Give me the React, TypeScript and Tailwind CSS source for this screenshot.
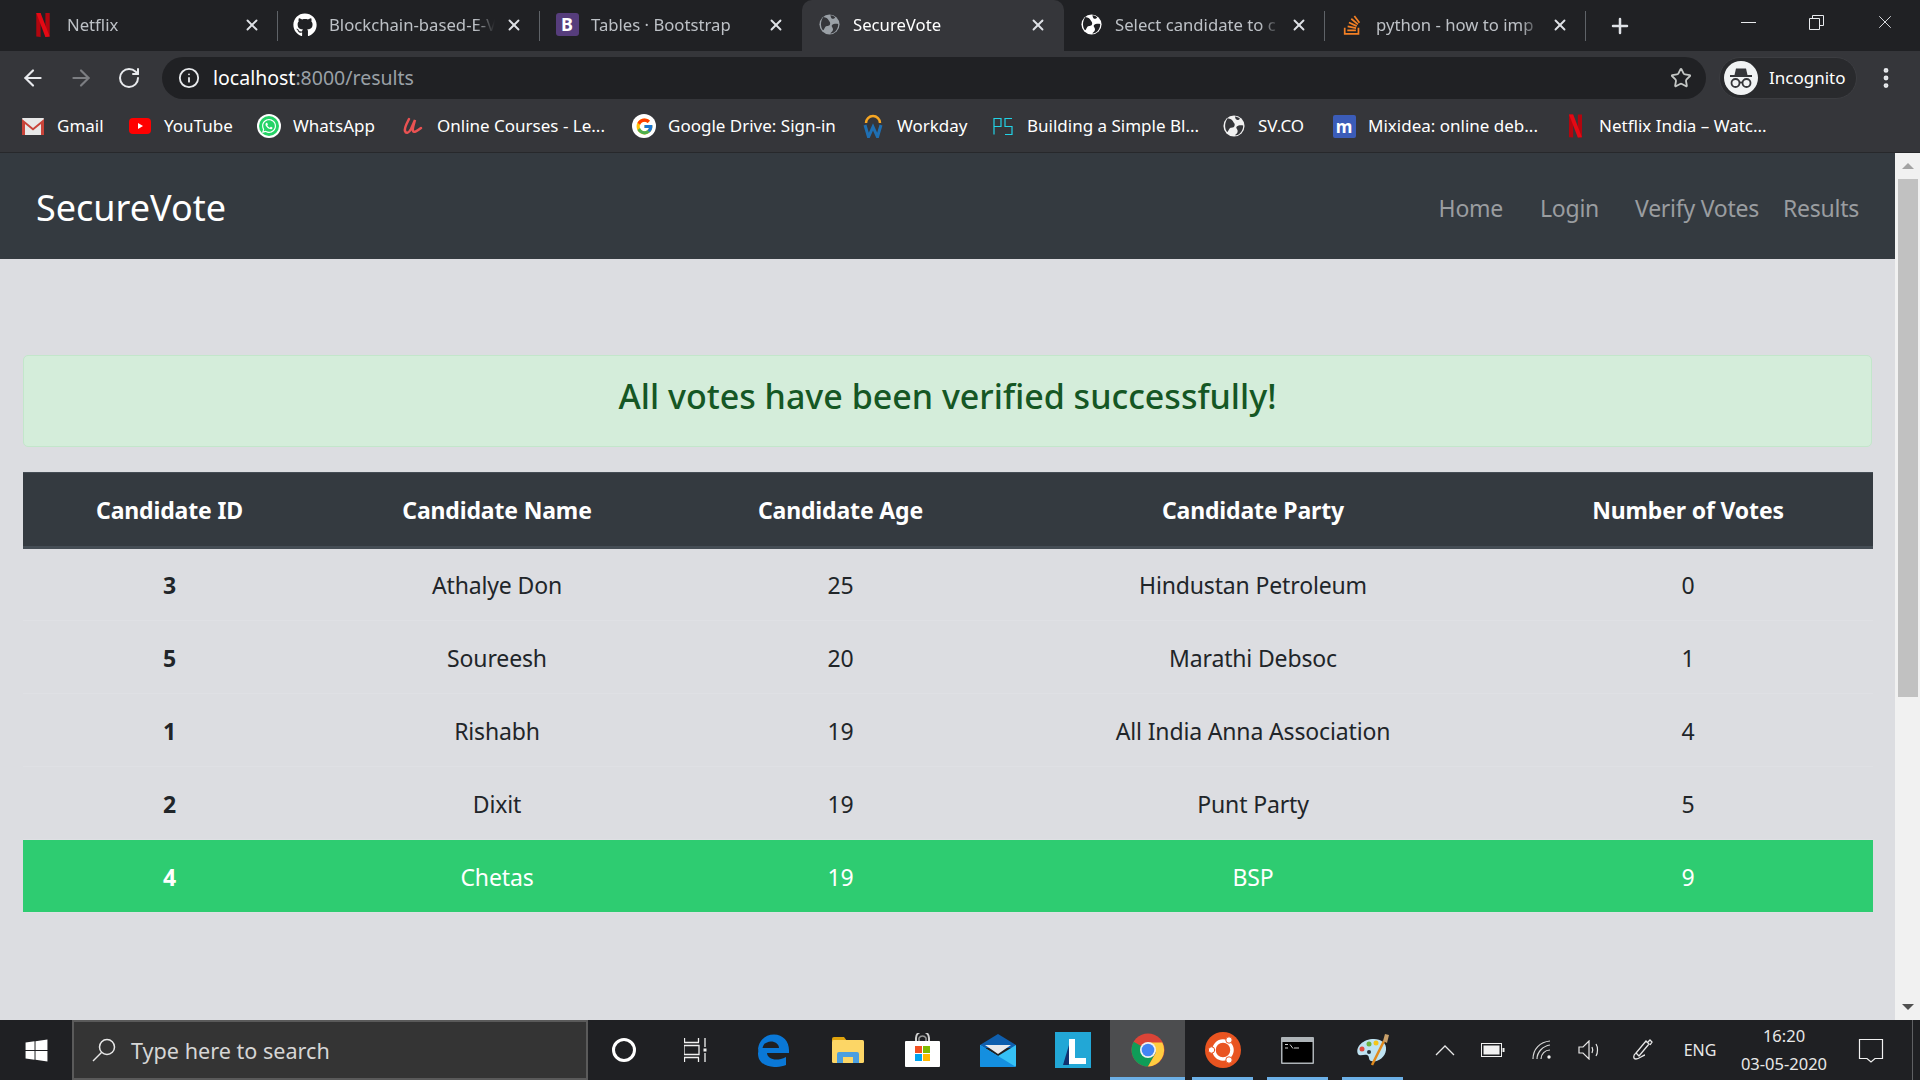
import { ArrowLeft, ArrowRight, Info, MoreVertical, Plus, RotateCw, Star, X } from "lucide-react";
import { FaGithub, FaStackOverflow, FaWhatsapp, FaWindows } from "react-icons/fa";
import { FcGoogle } from "react-icons/fc";

const Globe = ({ bg = "#ffffff", fg = "#202124", size = 21 }: { bg?: string; fg?: string; size?: number }) => (
  <svg width={size} height={size} viewBox="0 0 24 24">
    <circle cx="12" cy="12" r="11.5" fill={bg} />
    <path d="M5 3.500c3 .5 5 1.500 6 3.500s2.500 2.500 1.500 5-4 1-5.500 3-1 3-2.500 3.500C2 15.500 1 9 5 3.500z" fill={fg} />
    <path d="M15 12.500c2-1.500 4.500-1.500 7-1 .2 4-2 8-5.500 10-1.500.6-3 1-3.500.5 1.500-1.500 3-2 3-4.500s-2.500-3-1-5z" fill={fg} />
    <path d="M13 1.500c2 0 4 1 5.500 2.500-1 1.500-3 2-4 1s-1-2-1.500-3.500z" fill={fg} />
  </svg>
);

const NetflixN = ({ w = 14, h = 25 }: { w?: number; h?: number }) => (
  <svg width={w} height={h} viewBox="0 0 14 25">
    <path d="M0 0h4.500v25L0 24.500z" fill="#b1060f" />
    <path d="M9.500 0H14v24.500L9.500 25z" fill="#b1060f" />
    <path d="M0 0h4.500L14 24.500 9.500 25z" fill="#e50914" />
  </svg>
);

const Bootstrap = () => (
  <div className="flex h-[23px] w-[23px] items-center justify-center rounded-[3px] bg-[#563d7c] text-[18px] font-bold text-white">
    B
  </div>
);

const tabs = [
  { title: "Netflix", icon: <NetflixN w={14} h={24} />, width: "w-[262px]", sep: true },
  { title: "Blockchain-based-E-V", icon: <FaGithub size={24} className="text-white" />, width: "w-[262px]", sep: true },
  { title: "Tables · Bootstrap", icon: <Bootstrap />, width: "w-[262px]" },
  { title: "SecureVote", icon: <Globe bg="#9aa0a6" fg="#35363a" />, width: "w-[262px]", active: true },
  { title: "Select candidate to c", icon: <Globe />, width: "w-[261px]", sep: true },
  { title: "python - how to imp", icon: <FaStackOverflow size={22} className="text-[#f48024]" />, width: "w-[261px]", sep: true },
];

const GmailIcon = () => (
  <svg width="22" height="17" viewBox="0 0 22 17">
    <rect width="22" height="17" rx="1" fill="#e8e8e8" />
    <path d="M0 1l11 9 11-9v16h-3V6l-8 6.500L3 6v11H0z" fill="#c9443a" />
  </svg>
);

const YoutubeIcon = () => (
  <svg width="22" height="16" viewBox="0 0 22 16">
    <rect width="22" height="16" rx="4" fill="#ff0000" />
    <path d="M9 5l5 3-5 3z" fill="#fff" />
  </svg>
);

const WhatsappIcon = () => (
  <div className="flex h-[24px] w-[24px] items-center justify-center rounded-full bg-white">
    <div className="flex h-[20px] w-[20px] items-center justify-center rounded-full bg-[#25d366]">
      <FaWhatsapp size={16} className="text-white" />
    </div>
  </div>
);

const UdemyIcon = () => (
  <svg width="22" height="20" viewBox="0 0 22 20">
    <path d="M7 3C5 7 2 12 3 15c1 3 4 2 6-2l4-9c-1 4-3 9-2 11s4 0 8-3" fill="none" stroke="#ea5252" strokeWidth="2.500" strokeLinecap="round" />
  </svg>
);

const WorkdayIcon = () => (
  <svg width="20" height="24" viewBox="0 0 20 24">
    <path d="M3 9a7 7 0 0 1 14 0" fill="none" stroke="#f6a623" strokeWidth="2.500" />
    <path d="M2 11l3.500 12L10 13l4.500 10L18 11" fill="none" stroke="#1f6fb2" strokeWidth="3" />
  </svg>
);

const BuildingIcon = () => (
  <svg width="20" height="17" viewBox="0 0 20 17" fill="none" stroke="#22d3e6" strokeWidth="1.200">
    <path d="M1 16.500V.5h7v8H1" />
    <path d="M19 .5h-7v8h7v8h-7" />
  </svg>
);

const MixideaIcon = () => (
  <div className="flex h-[23px] w-[23px] items-center justify-center rounded-[2px] bg-[#3b5cb8] text-[17px] font-bold leading-none text-white">
    m
  </div>
);

const bookmarks = [
  { label: "Gmail", icon: <GmailIcon />, width: "w-[107px]" },
  { label: "YouTube", icon: <YoutubeIcon />, width: "w-[129px]" },
  { label: "WhatsApp", icon: <WhatsappIcon />, width: "w-[144px]" },
  { label: "Online Courses - Le...", icon: <UdemyIcon />, width: "w-[231px]" },
  { label: "Google Drive: Sign-in", icon: <div className="flex h-[24px] w-[24px] items-center justify-center rounded-full bg-white"><FcGoogle size={19} /></div>, width: "w-[229px]" },
  { label: "Workday", icon: <WorkdayIcon />, width: "w-[130px]" },
  { label: "Building a Simple Bl...", icon: <BuildingIcon />, width: "w-[231px]" },
  { label: "SV.CO", icon: <Globe size={22} bg="#f1f1f1" fg="#35363a" />, width: "w-[110px]" },
  { label: "Mixidea: online deb...", icon: <MixideaIcon />, width: "w-[231px]" },
  { label: "Netflix India – Watc...", icon: <NetflixN w={13} h={24} />, width: "w-[217px]" },
];

const IncognitoIcon = () => (
  <svg width="34" height="34" viewBox="0 0 34 34">
    <circle cx="17" cy="17" r="17" fill="#f1f3f4" />
    <path d="M12 7.500h10l1.500 6.500h-13z" fill="#35363a" />
    <rect x="6" y="14" width="22" height="2" fill="#35363a" />
    <circle cx="11.500" cy="22" r="4" fill="none" stroke="#35363a" strokeWidth="1.800" />
    <circle cx="22.500" cy="22" r="4" fill="none" stroke="#35363a" strokeWidth="1.800" />
    <path d="M15.500 21.500h3" stroke="#35363a" strokeWidth="1.800" />
  </svg>
);

const EdgeIcon = () => (
  <svg width="32" height="33" viewBox="0 0 32 33">
    <path d="M1 17C1 7 8 .5 17 .5c9 0 15 7 15 15.500v3H10c.5 6 9 9 19 4v8c-9 4-28 3-28-11.500 0-5 3-9 8-11.500-2 2-3 4-3.500 6H22c0-5-7-8-12-5.500C6 10 2 13 1 17z" fill="#0a78d7" />
  </svg>
);

const FolderIcon = () => (
  <svg width="32" height="26" viewBox="0 0 32 26">
    <path d="M0 2a2 2 0 0 1 2-2h10l3 4h-15z" fill="#e0a30c" />
    <rect y="3" width="32" height="23" rx="1.500" fill="#fcd666" />
    <path d="M5 26v-9a2 2 0 0 1 2-2h18a2 2 0 0 1 2 2v9h-6v-6H11v6z" fill="#4b9fe0" />
  </svg>
);

const StoreIcon = () => (
  <svg width="35" height="34" viewBox="0 0 35 34">
    <path d="M11 9V5a6 6 0 0 1 13 0v4" fill="none" stroke="#d0d0d0" strokeWidth="2" />
    <path d="M14 9V5a4 4 0 0 1 7 0v4" fill="none" stroke="#9a9a9a" strokeWidth="1.500" />
    <rect y="8" width="35" height="26" rx="1" fill="#ffffff" />
    <rect x="10" y="13" width="7" height="7" fill="#f25022" />
    <rect x="18" y="13" width="7" height="7" fill="#7fba00" />
    <rect x="10" y="21" width="7" height="7" fill="#00a4ef" />
    <rect x="18" y="21" width="7" height="7" fill="#ffb900" />
  </svg>
);

const MailIcon = () => (
  <svg width="36" height="33" viewBox="0 0 36 33">
    <path d="M0 11L18 0l18 11v3H0z" fill="#0f5fae" />
    <path d="M5 11h26l-13 9z" fill="#e9eaec" />
    <path d="M0 11l18 11 18-11v20.500a1.500 1.500 0 0 1-1.500 1.500h-33A1.500 1.500 0 0 1 0 31.500z" fill="#35c1f5" />
    <path d="M0 11l36 22H1.500A1.500 1.500 0 0 1 0 31.500z" fill="#148fe0" />
  </svg>
);

const LIcon = () => (
  <svg width="36" height="36" viewBox="0 0 36 36">
    <rect width="36" height="36" fill="#22a7d6" />
    <path d="M8 33l6-20v20z" fill="#12306f" />
    <path d="M14 7h6v19h11v6H14z" fill="#ffffff" />
  </svg>
);

const ChromeIcon = () => (
  <svg width="34" height="34" viewBox="0 0 34 34">
    <circle cx="17" cy="17" r="16.500" fill="#db4437" />
    <path d="M17 17L2.700 8.800A16.500 16.500 0 0 0 17 33.500l8-14.300z" fill="#0f9d58" />
    <path d="M17 9.500h14.300A16.500 16.500 0 0 1 17 33.500L25 19.500z" fill="#ffcd40" />
    <circle cx="17" cy="17" r="8" fill="#f1f1f1" />
    <circle cx="17" cy="17" r="6.300" fill="#4285f4" />
  </svg>
);

const UbuntuIcon = () => (
  <svg width="36" height="36" viewBox="0 0 36 36">
    <circle cx="18" cy="18" r="18" fill="#e95420" />
    <circle cx="18" cy="18" r="9" fill="none" stroke="#fff" strokeWidth="3.500" />
    <circle cx="6.500" cy="18" r="3.200" fill="#fff" stroke="#e95420" strokeWidth="1" />
    <circle cx="24" cy="8" r="3.200" fill="#fff" stroke="#e95420" strokeWidth="1" />
    <circle cx="24" cy="28" r="3.200" fill="#fff" stroke="#e95420" strokeWidth="1" />
  </svg>
);

const TerminalIcon = () => (
  <svg width="33" height="27" viewBox="0 0 33 27">
    <rect width="33" height="27" rx="1" fill="#aeb4b8" />
    <rect x="1.500" y="5" width="30" height="20.500" fill="#000" />
    <path d="M4 7.500h3M4 11h3M9 7.500l3 4M13 11h5" stroke="#d0d0d0" strokeWidth="1" />
  </svg>
);

const PaletteIcon = () => (
  <svg width="36" height="36" viewBox="0 0 36 36">
    <path d="M3 22C0 15 8 7 19 7c7 0 13 4 12 11-1 8-9 13-15 11-3-1-1-5-4-6-3-1-7 2-9-1z" fill="#bfe3f2" />
    <circle cx="7" cy="17" r="2.500" fill="#e04a3f" />
    <circle cx="14" cy="12" r="2.500" fill="#6db33f" />
    <circle cx="21" cy="11" r="2.500" fill="#f5c518" />
    <circle cx="14" cy="20" r="2" fill="#26323a" />
    <path d="M17 33L29 9" stroke="#e08a1e" strokeWidth="2.500" />
    <path d="M28 9l2-7 4 1-2 8z" fill="#c9a06a" />
  </svg>
);

const taskbarApps = [
  { icon: <EdgeIcon /> },
  { icon: <FolderIcon /> },
  { icon: <StoreIcon /> },
  { icon: <MailIcon /> },
  { icon: <LIcon /> },
  { icon: <ChromeIcon />, running: "full", active: true },
  { icon: <UbuntuIcon />, running: "inset" },
  { icon: <TerminalIcon />, running: "inset" },
  { icon: <PaletteIcon />, running: "inset" },
];

const candidates = [
  { id: 3, name: "Athalye Don", age: 25, party: "Hindustan Petroleum", votes: 0 },
  { id: 5, name: "Soureesh", age: 20, party: "Marathi Debsoc", votes: 1 },
  { id: 1, name: "Rishabh", age: 19, party: "All India Anna Association", votes: 4 },
  { id: 2, name: "Dixit", age: 19, party: "Punt Party", votes: 5 },
  { id: 4, name: "Chetas", age: 19, party: "BSP", votes: 9 },
];

export default function App() {
  return (
    <div className="flex h-[1080px] w-[1920px] flex-col overflow-hidden bg-[#dcdde1] [font-family:'Noto_Sans',sans-serif]">
      {/* tab strip */}
      <div className="flex h-[51px] shrink-0 bg-[#202124] pl-[16px]">
        {tabs.map((t) => (
          <div
            key={t.title}
            className={`relative flex h-[51px] items-center ${t.width} pb-[2px] pl-[15px] pr-[17px] ${t.active ? "rounded-t-[10px] bg-[#35363a] text-white" : "text-[#bdc1c6]"}`}
          >
            <div className="flex w-[24px] shrink-0 justify-center">{t.icon}</div>
            <div className="ml-[12px] min-w-0 flex-1 overflow-hidden whitespace-nowrap text-[16.7px] [mask-image:linear-gradient(to_right,black_88%,transparent)]">
              {t.title}
            </div>
            <X size={18} strokeWidth={2.5} className="ml-[10px] shrink-0 text-[#dee1e6]" />
            {t.sep ? <div className="absolute right-0 top-[11px] h-[30px] w-px bg-[#5f6368]" /> : null}
          </div>
        ))}
        <div className="flex w-[68px] items-center justify-center">
          <Plus size={24} strokeWidth={2.5} className="text-[#dee1e6]" />
        </div>
        <div className="flex flex-1 items-start justify-end text-[#e8eaed]">
          <div className="flex h-[44px] w-[68px] items-center justify-center">
            <div className="h-px w-[15px] bg-[#e8eaed]" />
          </div>
          <div className="flex h-[44px] w-[68px] items-center justify-center">
            <svg width="15" height="15" viewBox="0 0 15 15" fill="none" stroke="#e8eaed">
              <path d="M.5 3.500h10v11H.5z" />
              <path d="M3.500 3.500v-3h11v10h-4" />
            </svg>
          </div>
          <div className="flex h-[44px] w-[70px] items-center justify-center">
            <X size={22} strokeWidth={1} />
          </div>
        </div>
      </div>

      {/* toolbar */}
      <div className="flex h-[51px] shrink-0 items-center bg-[#35363a] pl-[20px] pt-[3px]">
        <ArrowLeft size={26} strokeWidth={2} className="text-[#e8eaed]" />
        <ArrowRight size={26} strokeWidth={2} className="ml-[22px] text-[#7c7e82]" />
        <RotateCw size={24} strokeWidth={2} className="ml-[23px] text-[#e8eaed]" />
        <div className="ml-[21px] flex h-[42px] w-[1544px] items-center rounded-full bg-[#202124] pl-[16px] pr-[14px]">
          <Info size={22} className="text-[#e8eaed]" />
          <div className="ml-[13px] flex-1 text-[19.5px]">
            <span className="text-white">localhost</span>
            <span className="text-[#9aa0a6]">:8000/results</span>
          </div>
          <Star size={22} strokeWidth={2} className="text-[#c4c7c5]" />
        </div>
        <div className="ml-[13px] flex h-[42px] w-[138px] items-center rounded-full border border-[#3c3d41] bg-[#292a2d] pl-[4px]">
          <IncognitoIcon />
          <span className="ml-[11px] text-[17px] text-white">Incognito</span>
        </div>
        <MoreVertical size={26} strokeWidth={2.5} className="ml-[16px] text-[#e8eaed]" />
      </div>

      {/* bookmarks */}
      <div className="flex h-[51px] shrink-0 items-center border-b border-[#27282b] bg-[#35363a] pb-[2px] pl-[21px]">
        {bookmarks.map((b) => (
          <div key={b.label} className={`flex items-center ${b.width} shrink-0`}>
            <div className="flex w-[24px] shrink-0 justify-center">{b.icon}</div>
            <span className="ml-[12px] whitespace-nowrap text-[17px] text-white">{b.label}</span>
          </div>
        ))}
      </div>

      {/* page */}
      <div className="flex min-h-0 flex-1">
        <div className="min-w-0 flex-1">
          <nav className="flex h-[106px] items-center bg-[#343a40] pl-[36px] pr-[36px] pt-[4px]">
            <div className="flex-1 text-[36px] text-white">SecureVote</div>
            <div className="flex items-center text-[23px] tracking-[-0.25px] text-[#9a9da0]">
              <a className="mr-[37px]">Home</a>
              <a className="mr-[36px]">Login</a>
              <a className="mr-[24px]">Verify Votes</a>
              <a>Results</a>
            </div>
          </nav>
          <div className="px-[23px] pt-[96px]">
            <div className="flex h-[92px] items-start justify-center rounded-[5px] border border-[#c3e6cb] bg-[#d4edda] pt-[15px] text-[34px] font-medium text-[#155724]">
              All votes have been verified successfully!
            </div>
            <table className="mt-[25px] w-[1850px] table-fixed border-collapse text-center text-[23px] tracking-[-0.15px] text-[#212529]">
              <thead>
                <tr className="h-[75px] border-b-[3px] border-t border-[#454d55] bg-[#343a40] text-white">
                  <th className="w-[293px] pt-[2px] font-bold">Candidate ID</th>
                  <th className="w-[362px] pt-[2px] font-bold">Candidate Name</th>
                  <th className="w-[325px] pt-[2px] font-bold">Candidate Age</th>
                  <th className="w-[500px] pt-[2px] font-bold">Candidate Party</th>
                  <th className="w-[370px] pt-[2px] font-bold">Number of Votes</th>
                </tr>
              </thead>
              <tbody>
                {candidates.map((c) => (
                  <tr
                    key={c.id}
                    className={`h-[73px] border-b border-[#dfe0e4] ${c.id === 4 ? "bg-[#2ecc71] text-white" : ""}`}
                  >
                    <td className="pt-[2px] font-bold">{c.id}</td>
                    <td className="pt-[2px]">{c.name}</td>
                    <td className="pt-[2px]">{c.age}</td>
                    <td className="pt-[2px]">{c.party}</td>
                    <td className="pt-[2px]">{c.votes}</td>
                  </tr>
                ))}
              </tbody>
            </table>
          </div>
        </div>
        {/* scrollbar */}
        <div className="flex w-[25px] shrink-0 flex-col items-center bg-[#f1f1f1]">
          <div className="flex h-[26px] w-full items-center justify-center">
            <div className="h-0 w-0 border-x-[6px] border-b-[6px] border-x-transparent border-b-[#a3a3a3]" />
          </div>
          <div className="h-[518px] w-[20px] bg-[#c1c1c1]" />
          <div className="flex-1" />
          <div className="flex h-[26px] w-full items-center justify-center">
            <div className="h-0 w-0 border-x-[6px] border-t-[6px] border-x-transparent border-t-[#505050]" />
          </div>
        </div>
      </div>

      {/* taskbar */}
      <div className="flex h-[60px] shrink-0 items-stretch bg-[#1f2023] text-white">
        <div className="flex w-[72px] items-center justify-center">
          <FaWindows size={25} className="text-white" />
        </div>
        <div className="flex w-[516px] items-center border-2 border-[#5a5a5a] bg-[#343434] pl-[17px]">
          <svg width="26" height="26" viewBox="0 0 26 26" fill="none" stroke="#e8e8e8" strokeWidth="1.500">
            <circle cx="16" cy="10" r="7.500" />
            <path d="M10.500 15.500L2 24" />
          </svg>
          <span className="ml-[14px] pt-[2px] text-[21.6px] text-[#d6d6d6]">Type here to search</span>
        </div>
        <div className="flex w-[71px] items-center justify-center">
          <div className="h-[24px] w-[24px] rounded-full border-[3px] border-white" />
        </div>
        <div className="flex w-[76px] items-center justify-center">
          <svg width="26" height="24" viewBox="0 0 26 24" fill="none" stroke="#f1f1f1" strokeWidth="1.300">
            <path d="M0 4.500h15M0 7.500h15v9H0zM0 19.500h15M.5 19.500V24M14.500 19.500V24M.5 0v4.500M14.500 0v4.500" />
            <path d="M21 0v9M21 15v9" />
            <rect x="19.500" y="10.500" width="3" height="3" fill="#f1f1f1" stroke="none" />
          </svg>
        </div>
        {taskbarApps.map((app, i) => (
          <div
            key={i}
            className={`relative flex w-[75px] items-center justify-center ${app.active ? "bg-[#4c4d4f]" : ""}`}
          >
            {app.icon}
            {app.running === "full" ? <div className="absolute inset-x-0 bottom-0 h-[3px] bg-[#6cb0e6]" /> : null}
            {app.running === "inset" ? <div className="absolute inset-x-[7px] bottom-0 h-[3px] bg-[#6cb0e6]" /> : null}
          </div>
        ))}
        <div className="flex w-[11px]" />
        <div className="flex w-[48px] items-center justify-center">
          <svg width="20" height="12" viewBox="0 0 20 12" fill="none" stroke="#e8e8e8" strokeWidth="1.300">
            <path d="M1 11l9-9 9 9" />
          </svg>
        </div>
        <div className="flex w-[48px] items-center justify-center">
          <svg width="24" height="14" viewBox="0 0 24 14">
            <rect x=".5" y=".5" width="20" height="13" fill="none" stroke="#f1f1f1" />
            <rect x="2.500" y="2.500" width="16" height="9" fill="#f1f1f1" />
            <rect x="21.500" y="5" width="2" height="4" fill="#f1f1f1" />
          </svg>
        </div>
        <div className="flex w-[49px] items-center justify-center">
          <svg width="20" height="20" viewBox="0 0 20 20" fill="none" stroke="#d8d8d8" strokeWidth="1.200">
            <path d="M1 19C1 9 8 2 18 1M5 19c0-7 6-13 13-14M9 19c0-5 4-9 9-9" />
            <circle cx="17" cy="17" r="1.700" fill="#f1f1f1" stroke="none" />
          </svg>
        </div>
        <div className="flex w-[47px] items-center justify-center">
          <svg width="24" height="20" viewBox="0 0 24 20" fill="none" stroke="#e8e8e8" strokeWidth="1.200">
            <path d="M1 7v6h4l6 6V1L5 7z" />
            <path d="M14 7c1 2 1 4 0 6M18 4c2 3 2 9 0 12" />
          </svg>
        </div>
        <div className="flex w-[60px] items-center justify-center">
          <svg width="22" height="22" viewBox="0 0 22 22" fill="none" stroke="#e8e8e8" strokeWidth="1.300">
            <path d="M14 2l3 3L7 17l-3-3zM16 3l2-2 2 2-2 3M4 14c-3 2-3 6 0 6 3 0 7-4 9-4" />
          </svg>
        </div>
        <div className="flex w-[54px] items-center justify-center text-[16px] text-[#e8e8e8]">ENG</div>
        <div className="flex w-[114px] flex-col items-center justify-center text-[16.5px] leading-[28px] text-[#e8e8e8]">
          <div>16:20</div>
          <div>03-05-2020</div>
        </div>
        <div className="flex w-[60px] items-center justify-center">
          <svg width="26" height="26" viewBox="0 0 26 26" fill="none" stroke="#f1f1f1" strokeWidth="1.200">
            <path d="M1.500 2.500h23v19H17l-4 3.500-4-3.500H1.500z" />
          </svg>
        </div>
        <div className="flex flex-1 justify-center pr-[8px]" />
        <div className="w-px bg-[#5f6063]" />
        <div className="w-[7px]" />
      </div>
    </div>
  );
}
